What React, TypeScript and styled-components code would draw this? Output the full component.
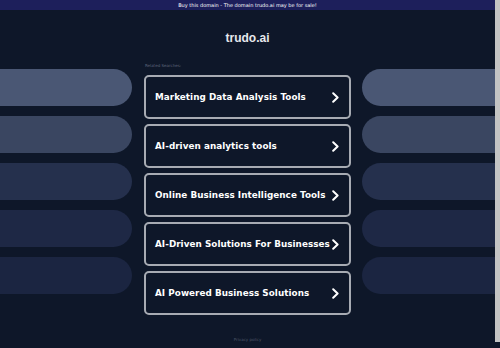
import styled, { createGlobalStyle } from "styled-components";

const SEARCHES = [
  "Marketing Data Analysis Tools",
  "AI-driven analytics tools",
  "Online Business Intelligence Tools",
  "AI-Driven Solutions For Businesses",
  "AI Powered Business Solutions",
];

const PILL_COLORS = ["#4a5774", "#3a4661", "#25304d", "#1e2845", "#1b2541"];

const GlobalStyle = createGlobalStyle`
  html, body {
    margin: 0;
    padding: 0;
    background: #0e1729;
  }
  html {
    border-right: 5px solid #c4c4c4;
  }
  body {
    font-family: "DejaVu Sans", Verdana, sans-serif;
    overflow-x: hidden;
  }
`;

const Page = styled.div`
  display: flex;
  flex-direction: column;
  align-items: stretch;
`;

const TopBar = styled.div`
  height: 10px;
  background: #1d1f5b;
  color: #ffffff;
  font-size: 5px;
  line-height: 10px;
  text-align: center;
`;

const Title = styled.h1`
  margin: 20px 0 0;
  height: 17px;
  font-size: 12px;
  line-height: 17px;
  font-weight: bold;
  color: #e6e8ec;
  text-align: center;
  font-family: "Liberation Sans", Arial, sans-serif;
`;

const Main = styled.div`
  display: grid;
  grid-template-columns: 1fr 207px 1fr;
  column-gap: 11px;
  margin-top: 14px;
`;

const Side = styled.div<{ $side: "left" | "right" }>`
  display: flex;
  flex-direction: column;
  gap: 10px;
  padding-top: 8px;
  ${({ $side }) => ($side === "left" ? "margin-right: 1px;" : "")}
`;

const Pill = styled.div<{ $side: "left" | "right"; $color: string }>`
  height: 37px;
  background: ${({ $color }) => $color};
  border-radius: ${({ $side }) =>
    $side === "left" ? "0 19px 19px 0" : "19px 0 0 19px"};
`;

const Center = styled.div`
  display: flex;
  flex-direction: column;
`;

const Label = styled.div`
  height: 14px;
  font-size: 4px;
  line-height: 10px;
  color: #5d6579;
  padding-left: 1px;
`;

const List = styled.div`
  display: flex;
  flex-direction: column;
  gap: 5px;
`;

const Card = styled.a`
  height: 40px;
  display: flex;
  align-items: center;
  justify-content: space-between;
  padding: 0 9px 0 9px;
  border: 2px solid #a7abb3;
  border-radius: 5px;
  background: #0e1729;
  color: #ffffff;
  text-decoration: none;
  font-size: 8.8px;
  font-weight: bold;
  letter-spacing: 0.05px;
  white-space: nowrap;
`;

const Chevron = styled.svg`
  width: 9px;
  height: 11px;
  flex-shrink: 0;
`;

const Footer = styled.div`
  margin-top: 22px;
  text-align: center;
  font-size: 4px;
  color: #4d5568;
`;

const App = () => (
  <>
    <GlobalStyle />
    <Page>
      <TopBar>Buy this domain - The domain trudo.ai may be for sale!</TopBar>
      <Title>trudo.ai</Title>
      <Main>
        <Side $side="left">
          {PILL_COLORS.map((c) => (
            <Pill key={c} $side="left" $color={c} />
          ))}
        </Side>
        <Center>
          <Label>Related Searches:</Label>
          <List>
            {SEARCHES.map((s) => (
              <Card key={s} href="#">
                <span>{s}</span>
                <Chevron viewBox="0 0 9 11">
                  <path
                    d="M2.2 1.3 L6.6 5.5 L2.2 9.7"
                    fill="none"
                    stroke="#ffffff"
                    strokeWidth="2"
                    strokeLinecap="round"
                    strokeLinejoin="round"
                  />
                </Chevron>
              </Card>
            ))}
          </List>
        </Center>
        <Side $side="right">
          {PILL_COLORS.map((c) => (
            <Pill key={c} $side="right" $color={c} />
          ))}
        </Side>
      </Main>
      <Footer>Privacy policy</Footer>
    </Page>
  </>
);

export default App;
